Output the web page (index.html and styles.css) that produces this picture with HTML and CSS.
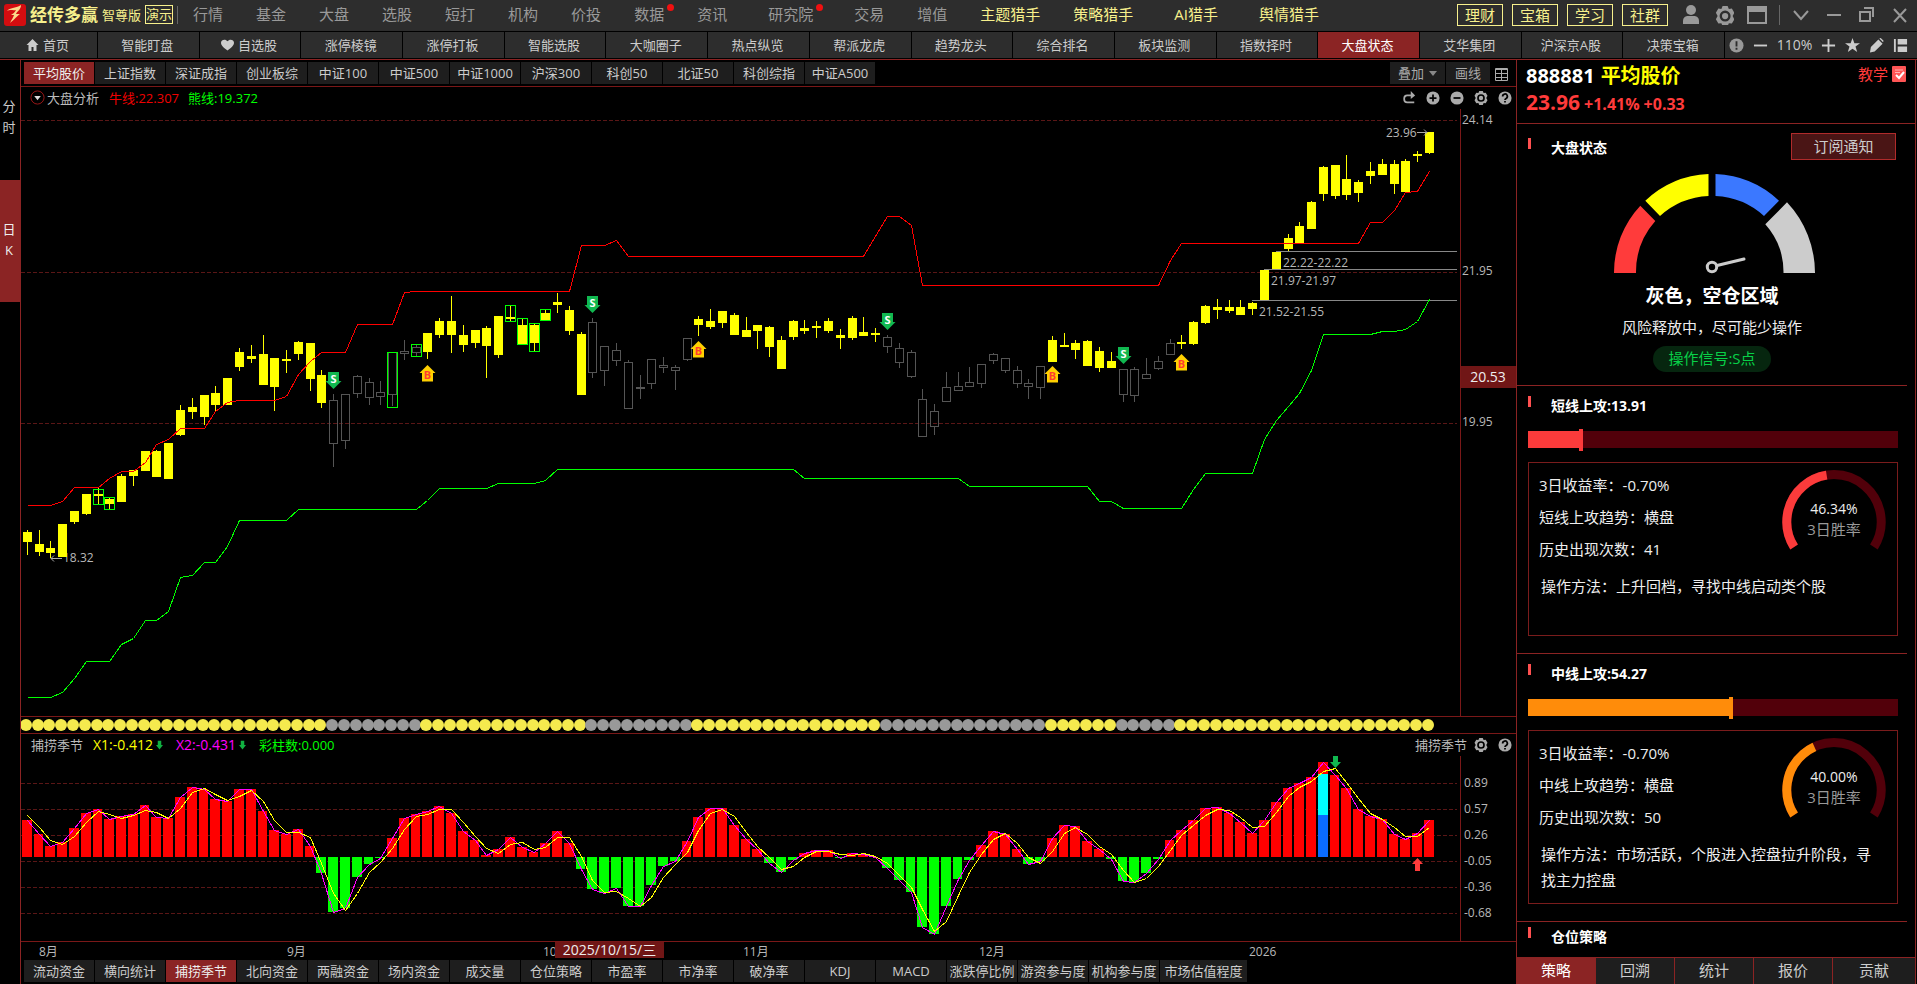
FILE: index.html
```html
<!DOCTYPE html>
<html lang="zh-CN">
<head>
<meta charset="utf-8">
<title>经传多赢 智尊版</title>
<link rel="stylesheet" href="styles.css">
</head>
<body>
<svg class="defs" aria-hidden="true">
  <symbol id="i-gear" viewBox="0 0 16 16"><path fill-rule="evenodd" d="M6 0h4l1 2.3 2.4-.3 2 3.4L14 8l1.4 2.6-2 3.4-2.4-.3L10 16H6l-1-2.3-2.4.3-2-3.4L2 8 .6 5.400l2-3.400 2.400.3zM8 3.600a4.400 4.400 0 1 0 0 8.800 4.400 4.400 0 0 0 0-8.800zM8 5.500a2.500 2.500 0 1 1 0 5 2.500 2.500 0 0 1 0-5z"/></symbol>
  <symbol id="i-help" viewBox="0 0 16 16"><circle cx="8" cy="8" r="7.500"/><path class="ink" d="M5.300 6.200a2.700 2.700 0 1 1 4 2.300c-.9.5-1.300.9-1.300 1.900M8 11.300v1.900"/></symbol>
  <symbol id="i-plus" viewBox="0 0 16 16"><circle cx="8" cy="8" r="7.500"/><path class="ink" d="M8 4v8M4 8h8"/></symbol>
  <symbol id="i-minus" viewBox="0 0 16 16"><circle cx="8" cy="8" r="7.500"/><path class="ink" d="M4 8h8"/></symbol>
  <symbol id="i-redo" viewBox="0 0 16 16"><path class="line" d="M12 5H6a3.500 3.500 0 0 0-3.500 3.500v1A3.500 3.500 0 0 0 6 13h8"/><path d="M10 0l5 5-5 4z"/></symbol>
</svg>
<header class="topbar">
  <svg class="logo" viewBox="0 0 22 22"><rect width="22" height="22" rx="3" fill="#d40d10"/><path d="M3 7c3-4 8-2 14-6 0 5-4 6-5 9h4c-3 2-5 5-10 9 2-4 3-5 4-8H7c2-1 4-3 5-5-3 1-6-1-9 1z" fill="#fbd98a"/></svg>
  <strong class="brand">经传多赢</strong><span class="edition">智尊版</span><span class="demo">演示</span>
  <nav class="menu">
    <a href="#">行情</a><a href="#">基金</a><a href="#">大盘</a><a href="#">选股</a><a href="#">短打</a><a href="#">机构</a><a href="#">价投</a><a href="#" class="dot">数据</a><a href="#">资讯</a><a href="#" class="wide dot">研究院</a><a href="#">交易</a><a href="#">增值</a><a href="#" class="gold">主题猎手</a><a href="#" class="gold">策略猎手</a><a href="#" class="gold wide">AI猎手</a><a href="#" class="gold">舆情猎手</a>
  </nav>
  <div class="shortcuts"><button>理财</button><button>宝箱</button><button>学习</button><button>社群</button></div>
  <div class="window-tools">
    <button aria-label="账户"><svg viewBox="0 0 20 20"><circle cx="10" cy="5" r="5"/><path d="M2 19v-3c0-4 3-5 5-5h6c2 0 5 1 5 5v3z"/></svg></button>
    <button aria-label="设置"><svg viewBox="-1 -1 18 18"><use href="#i-gear"/></svg></button>
    <button aria-label="窗口"><svg viewBox="0 0 20 20"><path fill-rule="evenodd" d="M0 1h20v18H0zm2 6v10h16V7z"/></svg></button>
    <span class="bar-line"></span>
    <button aria-label="展开"><svg viewBox="0 0 20 20"><path class="line" d="M3 6l7 8 7-8"/></svg></button>
    <button aria-label="最小化"><svg viewBox="0 0 20 20"><path class="line" d="M3 10h14"/></svg></button>
    <button aria-label="还原"><svg viewBox="0 0 20 20"><path class="line" d="M3 7h10v9H3zM7 3h9v9"/></svg></button>
    <button aria-label="关闭"><svg viewBox="0 0 20 20"><path class="line" d="M4 4l12 13M16 4L4 17"/></svg></button>
  </div>
</header>
<nav class="navbar">
  <a href="#" class="home"><svg viewBox="0 0 12 12"><path d="M6 0l6 6h-2v6H7V8H5v4H2V6H0z"/></svg>首页</a>
  <a href="#">智能盯盘</a>
  <a href="#"><svg viewBox="0 0 14 12"><path d="M7 12C2 8 0 6 0 3.500 0 0 5-1 7 2c2-3 7-2 7 1.500C14 6 12 8 7 12z"/></svg>自选股</a>
  <a href="#">涨停棱镜</a><a href="#">涨停打板</a><a href="#">智能选股</a><a href="#">大咖圈子</a><a href="#">热点纵览</a><a href="#">帮派龙虎</a><a href="#">趋势龙头</a><a href="#">综合排名</a><a href="#">板块监测</a><a href="#">指数择时</a><a href="#" class="on">大盘状态</a><a href="#">艾华集团</a><a href="#">沪深京A股</a><a href="#">决策宝箱</a>
  <div class="zoom-tools">
    <button aria-label="提示"><svg viewBox="0 0 16 16"><circle cx="8" cy="8" r="7.500" fill="#999"/><path d="M8 3.500v5.500M8 10.500v2" stroke="#2d2d2d" stroke-width="2"/></svg></button>
    <button aria-label="缩小"><svg viewBox="0 0 16 16"><path d="M1 7h14v2H1z"/></svg></button>
    <span>110%</span>
    <button aria-label="放大"><svg viewBox="0 0 16 16"><path d="M1 7h6V1h2v6h6v2H9v6H7V9H1z"/></svg></button>
    <button aria-label="收藏"><svg viewBox="0 0 16 16"><path d="M8 0l2 5.500h6L11.200 9l1.800 6-5-3.600L3 15l1.800-6L0 5.500h6z"/></svg></button>
    <button aria-label="画笔"><svg viewBox="0 0 16 16"><path d="M10 1.500L14.500 6 6 14.500 1 15.500l1-6zM11 .5l1.500-.5 3 3-.5 1.500z"/></svg></button>
    <button aria-label="布局"><svg viewBox="0 0 16 16"><path d="M1 1h2v14H1zM5 1h10v6H5zM5 9h10v6H5z"/></svg></button>
  </div>
</nav>
<main class="work">
  <aside class="periods"><button class="minute">分<br>时</button><button class="on">日<br>K</button></aside>
  <section class="charts">
    <div class="index-row">
      <button class="tab on">平均股价</button><button class="tab">上证指数</button><button class="tab">深证成指</button><button class="tab">创业板综</button><button class="tab">中证100</button><button class="tab">中证500</button><button class="tab">中证1000</button><button class="tab">沪深300</button><button class="tab">科创50</button><button class="tab">北证50</button><button class="tab">科创综指</button><button class="tab">中证A500</button>
      <div class="draw-tools"><button class="tab overlay">叠加<i></i></button><button class="tab pen">画线</button><button class="grid-btn" aria-label="宫格"><svg viewBox="0 0 13 13"><path d="M.5.5h12v12H.5zM.5 1.500h12M.5 5.500h12M6.500 1.500v11M.5 9.500h12" class="thin"/></svg></button></div>
    </div>
    <div class="info-row">
      <svg class="drop" viewBox="0 0 16 16"><circle cx="8" cy="8" r="7" fill="none" stroke="#a01818"/><path d="M4.500 6.500h7L8 11z" fill="#ddd"/></svg>
      <span class="name">大盘分析</span><span class="bull">牛线:22.307</span><span class="bear">熊线:19.372</span>
      <div class="icons"><svg><use href="#i-redo"/></svg><svg><use href="#i-plus"/></svg><svg><use href="#i-minus"/></svg><svg><use href="#i-gear"/></svg><svg><use href="#i-help"/></svg></div>
    </div>
    <div class="plot main-plot"><svg id="kline"></svg></div>
    <div class="plot strip"><svg id="dots"></svg></div>
    <div class="info-row season">
      <span class="name">捕捞季节</span><span class="x1">X1:-0.412</span><svg class="down" viewBox="0 0 8 10"><path d="M2 0h4v5h2L4 10 0 5h2z"/></svg><span class="x2">X2:-0.431</span><svg class="down" viewBox="0 0 8 10"><path d="M2 0h4v5h2L4 10 0 5h2z"/></svg><span class="bear">彩柱数:0.000</span>
      <div class="icons"><span>捕捞季节</span><svg><use href="#i-gear"/></svg><svg><use href="#i-help"/></svg></div>
    </div>
    <div class="plot sub-plot"><svg id="season"></svg></div>
    <div class="plot dates"><svg id="dates"></svg></div>
    <div class="indicator-row">
      <button class="tab">流动资金</button><button class="tab">横向统计</button><button class="tab on">捕捞季节</button><button class="tab">北向资金</button><button class="tab">两融资金</button><button class="tab">场内资金</button><button class="tab">成交量</button><button class="tab">仓位策略</button><button class="tab">市盈率</button><button class="tab">市净率</button><button class="tab">破净率</button><button class="tab">KDJ</button><button class="tab">MACD</button><button class="tab">涨跌停比例</button><button class="tab">游资参与度</button><button class="tab">机构参与度</button><button class="tab last">市场估值程度</button>
    </div>
  </section>
  <aside class="panel">
    <div class="quote">
      <div class="quote-name"><b>888881</b><b class="stock">平均股价</b><a href="#" class="teach">教学<svg viewBox="0 0 14 16"><rect width="14" height="16" rx="1" fill="#ff5555"/><path d="M3 4h8M3 6.500h5" stroke="#ffb3b3"/><path d="M4 9l3 3 5-6" fill="none" stroke="#fff" stroke-width="2"/></svg></a></div>
      <div class="quote-price"><b>23.96</b><b class="chg">+1.41%</b><b class="chg">+0.33</b></div>
    </div>
    <div class="panel-body">
      <section class="state">
        <div class="head"><h2>大盘状态</h2><button class="notify">订阅通知</button></div>
        <svg class="gauge" viewBox="-105 -103 210 104">
          <path fill="#ff3b3b" d="M-98 0A98 98 0 0 1-71.700-67.300L-56.700-52A77 77 0 0 0-76 0z"/>
          <path fill="#ff0" d="M-66.700-72.300A98.500 98.500 0 0 1-3.500-99V-77A77 77 0 0 0-52-57z"/>
          <path fill="#3b78ff" d="M3.500-99A98.500 98.500 0 0 1 67-72.300L52-57A77 77 0 0 0 3.500-77z"/>
          <path fill="#ccc" d="M75-70.700A103 103 0 0 1 103 0H71.500A72 72 0 0 0 53.300-48.700z"/>
          <circle cx="0" cy="-6" r="4.700" fill="none" stroke="#ccc" stroke-width="3"/><path d="M5-7.500L32-14" stroke="#ccc" stroke-width="3" stroke-linecap="round"/>
        </svg>
        <p class="verdict">灰色，空仓区域</p>
        <p class="advice">风险释放中，尽可能少操作</p>
        <p class="signal">操作信号:S点</p>
      </section>
      <section class="attack short">
        <div class="head"><h2>短线上攻:13.91</h2></div>
        <div class="level"><div class="fill" style="width:13.91%"></div></div>
        <div class="card">
          <div class="facts"><p>3日收益率：-0.70%</p><p>短线上攻趋势：横盘</p><p>历史出现次数：41</p></div>
          <div class="ring"><svg viewBox="0 0 104 84"><path class="track" d="M12.100 77A47.200 47.200 0 1 1 91.900 77"/><path class="value" pathLength="100" stroke-dasharray="46.34 100" d="M12.100 77A47.200 47.200 0 1 1 91.900 77"/></svg><div class="rate"><span>46.34%</span><small>3日胜率</small></div></div>
          <p class="method">操作方法：上升回档，寻找中线启动类个股</p>
        </div>
      </section>
      <section class="attack middle">
        <div class="head"><h2>中线上攻:54.27</h2></div>
        <div class="level"><div class="fill" style="width:54.27%"></div></div>
        <div class="card">
          <div class="facts"><p>3日收益率：-0.70%</p><p>中线上攻趋势：横盘</p><p>历史出现次数：50</p></div>
          <div class="ring"><svg viewBox="0 0 104 84"><path class="track" d="M12.100 77A47.200 47.200 0 1 1 91.900 77"/><path class="value" pathLength="100" stroke-dasharray="40 100" d="M12.100 77A47.200 47.200 0 1 1 91.900 77"/></svg><div class="rate"><span>40.00%</span><small>3日胜率</small></div></div>
          <p class="method">操作方法：市场活跃，个股进入控盘拉升阶段，寻找主力控盘</p>
        </div>
      </section>
      <section class="position"><div class="head"><h2>仓位策略</h2></div></section>
    </div>
    <div class="panel-tabs"><button class="on">策略</button><button>回溯</button><button>统计</button><button>报价</button><button>贡献</button></div>
  </aside>
</main>
<script src="chart.js"></script>
</body>
</html>
```
FILE: styles.css
```css
* { box-sizing: border-box; }
body { margin: 0; height: 100vh; display: flex; flex-direction: column; overflow: hidden; background: #000; color: #ccc; font: 13px/16px "Open Sans", "Noto Sans CJK SC", sans-serif; }
a { color: inherit; text-decoration: none; }
button { font: inherit; color: inherit; background: none; border: 0; padding: 0; margin: 0; white-space: nowrap; }
p, h2 { margin: 0; }
svg { display: block; fill: currentColor; flex: none; }
.defs { position: absolute; width: 0; height: 0; }
.line { fill: none; stroke: currentColor; stroke-width: 2; }
.thin { fill: none; stroke: currentColor; stroke-width: 1; }
.ink { fill: none; stroke: #000; stroke-width: 2; }

.topbar { height: 32px; flex: none; display: flex; align-items: center; padding: 0 7px 2px 4px; background: #2d2d2d; border-bottom: 1px solid #000; color: #999; white-space: nowrap; }
.logo { width: 22px; height: 22px; margin-right: 4px; }
.brand { font-size: 17px; color: #f7f08c; margin-right: 4px; }
.edition { color: #f7f08c; margin-right: 4px; }
.demo { width: 28px; height: 19px; line-height: 17px; text-align: center; border: 1px solid #f7f08c; color: #f7f08c; }
.menu { display: flex; gap: 33px; margin-left: 4px; padding: 0 0 2px 15px; border-left: 1px solid #666; font-size: 15px; }
.menu a { position: relative; }
.menu .wide { margin: 0 8px; }
.menu .gold { color: #f7f08c; }
.menu .dot::after { content: ""; position: absolute; right: -10px; top: -2px; width: 7px; height: 7px; border-radius: 50%; background: #f01010; }
.shortcuts { display: flex; gap: 9px; margin-left: auto; color: #f7f08c; font-size: 15px; }
.shortcuts button { width: 46px; height: 22px; line-height: 18px; border: 1px solid #f7f08c; }
.window-tools { display: flex; align-items: center; gap: 13px; margin-left: 13px; }
.window-tools svg { width: 20px; height: 20px; }
.bar-line { width: 1px; height: 20px; background: #666; margin: 0 -2px 0 -1px; }

.navbar { height: 28px; flex: none; display: flex; gap: 1px; padding-bottom: 1px; border-bottom: 1px solid #8b2323; background: #000; }
.navbar a { flex: 1 1 0; display: flex; align-items: center; justify-content: center; gap: 4px; padding-right: 2px; background: #2d2d2d; white-space: nowrap; }
.navbar .home { flex: 0 0 97px; }
.navbar .on { background: #8b2424; color: #fff; }
.navbar a svg { width: 13px; height: 12px; }
.zoom-tools { flex: 0 0 192px; display: flex; align-items: center; justify-content: space-between; padding: 0 9px 0 4px; background: #2d2d2d; font-size: 14px; }
.zoom-tools svg { width: 15px; height: 15px; }

.work { flex: 1; min-height: 0; display: flex; }
.periods { width: 21px; flex: none; border-right: 1px solid #8b2323; padding-top: 36px; line-height: 21px; }
.periods button { display: block; width: 100%; padding: 0 2px 3px 0; }
.periods .minute { height: 42px; margin-bottom: 42px; }
.periods .on { height: 122px; background: #8b2424; color: #eee; }
.charts { flex: 1; min-width: 0; display: flex; flex-direction: column; }
.index-row { height: 27px; flex: none; display: flex; gap: 1px; padding: 2px 8px 2px 3px; border-bottom: 1px solid #7a1818; }
.tab { width: 70px; height: 22px; background: #1e1e1e; text-align: center; flex: none; }
.tab.on { background: #8b2424; color: #eee; }
.draw-tools { margin-left: auto; display: flex; gap: 1px; color: #aaa; }
.tab.overlay { width: 55px; display: flex; align-items: center; justify-content: center; gap: 5px; }
.overlay i { border: 4px solid transparent; border-top: 5px solid #888; border-bottom: 0; }
.tab.pen { width: 44px; }
.grid-btn { margin-left: 4px; padding-top: 2px; }
.grid-btn svg { width: 13px; height: 13px; }
.info-row { height: 22px; flex: none; display: flex; align-items: center; padding: 0 4px 1px 9px; white-space: nowrap; }
.drop { width: 15px; height: 15px; margin-right: 2px; }
.name { margin-right: 10px; color: #bbb; }
.bull { color: #f00000; margin-right: 9px; }
.bear { color: #0f0; }
.x1, .x2 { font-size: 14px; color: #ff0; }
.x2 { color: #f0f; }
.down { width: 7px; height: 10px; color: #10b040; margin: 0 13px 0 3px; }
.season { padding-left: 10px; }
.icons { margin-left: auto; display: flex; align-items: center; gap: 10px; color: #aaa; }
.icons svg { width: 14px; height: 14px; }
.season .icons span { margin-right: -3px; color: #bbb; }
.plot { position: relative; min-height: 0; }
.plot svg { position: absolute; inset: 0; width: 100%; height: 100%; }
.plot text { font-size: 12px; fill: #b8b8b8; }
.plot text.mark { font-size: 11px; font-weight: bold; text-anchor: middle; fill: #fff; }
.plot text.buy { fill: #ff3b30; }
.plot text.tip { font-size: 14px; fill: #eee; text-anchor: middle; }
.plot .crisp { shape-rendering: crispEdges; }
.plot .gridline { stroke: #5a1616; stroke-dasharray: 4 2; }
.plot .axis { stroke: #7a1818; }
.main-plot { flex: 607 1 0; }
.sub-plot { flex: 185 1 0; }
.strip { height: 18px; flex: none; border: solid #7a1818; border-width: 1px 0; }
.dates { height: 18px; flex: none; border-top: 1px solid #7a1818; }
.indicator-row { display: flex; flex: none; gap: 1px; padding: 1px 0 2px 3px; }
.indicator-row .tab { padding-bottom: 1px; }
.tab.last { width: 87px; }

.panel { width: 400px; margin-right: 1px; flex: none; display: flex; flex-direction: column; border: solid #8b2323; border-width: 0 1px; }
.quote { height: 64px; flex: none; padding: 6px 9px 0; border-bottom: 1px solid #8b2323; }
.quote-name { display: flex; align-items: center; gap: 6px; height: 20px; font-size: 20px; line-height: 20px; color: #fff; }
.stock { color: #ff0; }
.teach { margin-left: auto; display: flex; gap: 4px; align-items: center; padding-bottom: 4px; font-size: 15px; color: #ff3b3b; }
.teach svg { width: 14px; height: 16px; }
.quote-price { display: flex; align-items: baseline; gap: 4px; margin-top: 4px; font-size: 21px; line-height: 24px; color: #ff3b3b; }
.chg { font-size: 16px; }
.panel-body { flex: 1; min-height: 0; overflow: hidden; margin-right: 8px; }
.panel-body section { padding: 0 8px 0 11px; border-bottom: 1px solid #8b2323; }
.head { display: flex; align-items: flex-start; justify-content: space-between; height: 45px; padding-top: 10px; }
.head::before { content: ""; width: 3px; height: 11px; background: #ff5050; }
.head h2 { margin: 0 auto 0 20px; font-size: 14px; line-height: 20px; color: #fff; }
.panel-body .state { height: 262px; padding-right: 11px; }
.state .head { padding-top: 9px; }
.state .head::before { margin-top: 5px; }
.state .head h2 { margin-top: 5px; }
.notify { width: 105px; height: 27px; padding-bottom: 2px; border: 1px solid #b02b2b; background: #4a1515; font-size: 15px; }
.gauge { width: 210px; height: 104px; margin: 1px auto 0; }
.state p { text-align: center; color: #eee; }
.state .verdict { margin-top: 9px; font-size: 19px; line-height: 26px; font-weight: bold; color: #fff; }
.state .advice { margin-top: 6px; font-size: 15px; line-height: 24px; }
.state .signal { width: 118px; height: 26px; margin: 7px auto 0; border-radius: 13px; background: #06260f; color: #08d048; font-size: 15px; line-height: 24px; }
.attack { height: 268px; }
.level { height: 17px; background: #52000a; width: 370px; }
.fill { position: relative; height: 17px; background: var(--tone); }
.fill::after { content: ""; position: absolute; left: 100%; top: -2px; width: 4px; height: 22px; background: var(--tone); }
.short { --tone: #fb3b3b; }
.middle { --tone: #ff8c0a; }
.card { width: 370px; height: 174px; margin-top: 14px; padding: 6px 11px 0 10px; display: grid; grid-template-columns: 1fr 104px; align-content: start; border: 1px solid #7a1c1c; color: #eee; font-size: 15px; }
.facts { line-height: 32px; }
.ring { display: grid; width: 104px; margin-top: 1px; align-content: start; }
.ring svg, .rate { grid-area: 1 / 1; }
.ring svg { width: 104px; height: 84px; }
.track, .value { fill: none; stroke: #52000a; stroke-width: 9; }
.value { stroke: var(--tone); }
.rate { display: flex; flex-direction: column; align-items: center; padding-top: 28px; font-size: 14px; line-height: 21px; }
.rate small { font-size: 15px; color: #999; }
.method { grid-column: 1 / 3; margin: 8px 8px 0 2px; line-height: 26px; }
.panel-body .position { border: 0; }
.position .head { padding-top: 5px; }
.panel-tabs { height: 27px; flex: none; display: flex; border-top: 1px solid #8b2323; font-size: 15px; }
.panel-tabs button { flex: 79 1 0; background: #1e1e1e; border-right: 1px solid #8b2323; padding-bottom: 2px; }
.panel-tabs button:last-child { flex-grow: 83; border-right: 0; }
.panel-tabs .on { background: #8b2424; color: #fff; }
```
FILE: chart.js
```javascript
// Candles: [high, body top, body bottom, low] in plot units, measured downwards.
const TOP = 109;
const candles = [
[530,532,542,555],[530,544,552,556],[541,548,553,558],[524,524,557,557],[511,511,522,524],[494,494,514,515],[488,494,496,504],[497,499,504,509],[474,476,502,502],[470,470,476,486],
[451,451,471,471],[450,451,477,477],[443,443,479,479],[405,410,435,436],[398,407,412,419],[395,395,417,425],[386,393,405,412],[378,378,405,405],[348,352,367,371],[345,356,359,363],
[335,354,385,385],[358,358,387,411],[350,359,361,373],[341,342,354,360],[343,343,379,391],[370,375,403,408],[394,400,444,467],[394,394,441,449],[375,376,394,398],[378,382,398,405],
[381,392,397,405],[352,352,395,406],[340,351,354,360],[344,347,353,356],[333,333,352,359],[318,321,335,338],[296,321,335,353],[325,335,345,352],[330,330,343,348],[326,328,346,378],
[316,316,355,358],[305,317,319,322],[318,325,344,344],[323,325,343,352],[309,313,320,320],[293,302,305,313],[306,310,331,335],[332,334,395,395],[318,322,373,378],[346,346,371,386],
[343,350,361,366],[360,362,409,409],[375,387,389,399],[359,359,384,389],[357,365,368,373],[365,367,371,390],[338,338,360,361],[316,319,325,336],[309,321,327,329],[311,311,323,328],
[313,315,335,335],[317,330,337,337],[325,325,331,349],[326,327,347,357],[336,340,369,369],[320,321,337,340],[320,328,331,334],[321,326,328,338],[318,321,331,333],[329,335,338,349],
[316,318,338,340],[317,332,336,336],[328,333,335,342],[335,337,347,353],[343,348,363,368],[350,352,377,378],[389,399,437,437],[404,411,427,435],[372,387,402,402],[372,386,391,391],
[367,382,387,387],[364,364,384,388],[353,354,361,364],[358,358,371,373],[366,370,384,388],[379,383,387,399],[366,366,388,399],[336,340,362,362],[333,345,347,347],[340,343,350,359],
[340,341,366,366],[347,351,368,372],[352,361,368,368],[369,369,395,402],[367,369,396,402],[358,374,379,379],[356,361,369,370],[339,343,355,355],[335,342,344,349],[321,322,344,345],
[305,306,323,324],[299,307,310,319],[300,307,311,313],[300,307,315,315],[302,303,309,315],[270,270,300,300],[252,252,270,270],[234,238,249,251],[222,226,243,243],[201,202,229,229],
[166,167,194,201],[165,165,196,199],[155,179,195,200],[180,182,193,202],[162,171,176,184],[159,164,175,175],[160,164,184,194],[159,161,192,192],[151,154,156,162],[132,132,153,154]];
const hollow = [[26, 33], [48, 56], [73, 86], [93, 97]];
const boxes = [[6,489,504],[7,497,509],[31,352,407],[33,344,356],[41,305,321],[42,318,344],[43,323,351],[44,309,320]];
const bull = [[0,505],[2,505],[3,501],[4,487],[6,487],[7,478],[8,471],[9,471],[10,462],[11,444],[12,439],[13,428],[15,428],[16,411],[17,402],[18,400],[21,400],[22,396],[23,374],[24,361],[25,352],[27,352],[28,324],[31,324],[32,292],[33,291],[46,291],[47,245],[49,245],[50,240],[51,256],[71,256],[73,216],[74,216],[75,225],[76,285],[96,285],[97,260],[98,243],[113,243],[114,222],[115,222],[116,210],[117,192],[118,191],[119,171]];
const bear = [[0,697],[2,697],[3,692],[4,678],[5,661],[7,661],[8,644],[9,638],[10,620],[11,620],[12,611],[13,577],[14,575],[15,562],[16,562],[17,546],[18,520],[22,520],[23,509],[33,509],[34,500],[35,488],[39,488],[40,483],[43,483],[44,480],[45,469],[65,469],[66,478],[79,478],[80,486],[90,486],[91,501],[92,501],[93,508],[98,508],[99,489],[100,473],[104,473],[105,439],[106,420],[107,406],[108,393],[109,370],[110,334],[114,334],[115,331],[116,331],[117,329],[118,321],[119,299]];
// Oscillator levels, three units to a pixel, measured downwards.
const BASE = 471;
const bars = [360,402,438,427,384,339,327,357,348,342,315,351,354,291,261,267,297,303,267,267,333,390,402,387,438,519,636,624,531,492,474,414,354,342,333,318,339,393,420,465,447,411,441,456,429,393,429,507,567,579,564,618,618,555,498,483,423,351,324,324,375,417,447,489,516,480,459,450,450,474,459,462,471,504,540,576,681,702,618,537,480,435,393,402,447,492,483,414,375,378,423,447,477,543,546,519,477,420,390,360,324,321,339,366,399,360,306,264,249,231,186,225,264,327,348,357,402,417,399,360];
const slow = [345,380,421,433,409,366,334,343,355,346,331,335,353,325,277,265,282,301,287,270,302,361,397,397,412,490,580,630,580,515,485,445,387,349,341,328,328,367,408,445,458,431,427,448,441,412,412,468,540,575,574,593,618,590,530,492,455,389,338,327,347,396,438,472,506,498,471,454,452,463,466,460,469,489,524,560,628,692,663,585,515,463,416,398,428,470,489,452,399,380,402,437,463,510,545,533,497,450,405,375,345,326,331,352,381,379,335,288,262,242,212,205,245,295,340,358,381,408,408,380];

const isHollow = i => hollow.some(([a, b]) => i >= a && i <= b);
const rect = (x, y, w, h, a) => `<rect class="crisp" x="${x}" y="${y}" width="${w}" height="${h}" ${a}/>`;
const poly = (pts, c) => `<polyline class="crisp" fill="none" stroke="${c}" points="${pts.map(p => p.join()).join(' ')}"/>`;
const text = (x, y, s, c = '') => `<text x="${x}" y="${y}" class="${c}">${s}</text>`;
const hline = (x1, x2, y, c) => `<path class="crisp ${c}" d="M${x1} ${y + .5}H${x2}"/>`;

function draw() {
  const k = document.getElementById('kline');
  const w = k.clientWidth, plot = w - 56;
  const X = i => Math.floor(6.4 + i * (plot - 37) / 119);
  const sy = k.clientHeight / 607;
  const Y = v => Math.round((v - TOP) * sy);
  const right = plot - 3;
  let s = '';
  [120, 272, 423].forEach(v => s += hline(0, right, Y(v), 'gridline'));
  s += `<path class="crisp axis" d="M${plot + .5} 0V${Y(716)}"/>`;
  s += text(X(3) + 1, Y(558) + 4, '18.32') + `<path d="M${X(2) + 1} ${Y(558) + .5}h11m-11 0l3-3m-3 3l3 3" fill="none" stroke="#aaa"/>`;
  candles.forEach(([hi, a, b, lo], i) => {
    const x = X(i), h = Math.max(Y(b) - Y(a), 2);
    if (isHollow(i)) {
      if (a > hi) s += rect(x, Y(hi), 1, Y(a) - Y(hi), 'fill="#555"');
      if (lo > b) s += rect(x, Y(b), 1, Y(lo) - Y(b), 'fill="#555"');
      s += `<rect class="crisp" x="${x - 3.5}" y="${Y(a) + .5}" width="8" height="${h - 1}" fill="none" stroke="#555"/>`;
    } else s += rect(x, Y(hi), 1, Y(lo) - Y(hi), 'fill="#ff0"') + rect(x - 4, Y(a), 9, h, 'fill="#ff0"');
  });
  boxes.forEach(([i, a, b]) => s += `<rect class="crisp" x="${X(i) - 4.5}" y="${Y(a) + .5}" width="10" height="${Y(b) - Y(a)}" fill="none" stroke="#0f0"/>`);
  [[106, 251, '22.22-22.22'], [105, 269, '21.97-21.97'], [104, 300, '21.52-21.55']].forEach(([i, v, t]) => {
    s += `<path class="crisp" stroke="#888" d="M${X(i)} ${Y(v) + .5}H${right}"/>` + text(X(i) + 7, Y(v) + 16, t);
  });
  const line = pts => pts.map(([i, v]) => [X(i) + .5, Y(v) + .5]);
  s += poly(line(bull), '#f00') + poly(line(bear), '#0f0');
  [[26, 372], [48, 296], [73, 313], [93, 347]].forEach(([i, v]) => {
    const x = X(i) + .5, y = Y(v);
    s += `<path fill="#10b850" d="M${x - 5.5} ${y}h11v9h2.500l-8 8-8-8h2.500z"/>` + text(x, y + 11, 'S', 'mark');
  });
  [[34, 365], [57, 341], [87, 366], [98, 354]].forEach(([i, v]) => {
    const x = X(i) + .5, y = Y(v);
    s += `<path fill="#ffd000" d="M${x} ${y}l8 8h-2.500v8.500h-11v-8.500h-2.500z"/>` + text(x, y + 14, 'B', 'mark buy');
  });
  s += text(X(119) - 43, Y(133) + 4, '23.96') + `<path d="M${X(119) - 12} ${Y(132) + .5}h10m0 0l-3-3m3 3l-3 3" fill="none" stroke="#aaa"/>`;
  [[120, '24.14'], [271, '21.95'], [422, '19.95']].forEach(([v, t]) => s += text(plot + 2, Y(v) + 4, t));
  s += rect(plot + 1, Y(366), 55, 22, 'fill="#701616"') + text(plot + 28, Y(377) + 5, '20.53', 'tip');
  k.innerHTML = s;

  document.getElementById('dots').innerHTML = candles.map((_, i) =>
    `<circle cx="${X(i) - 1}" cy="8" r="6" fill="${isHollow(i) ? '#999' : '#f5ea4e'}"/>`).join('');

  const m = document.getElementById('season');
  const sm = m.clientHeight / 185;
  const V = v => Math.round((v - 168) / 3 * sm);
  s = '';
  [[250, '0.89'], [328, '0.57'], [406, '0.26'], [484, '-0.05'], [562, '-0.36'], [640, '-0.68']].forEach(([v, t]) => {
    s += hline(0, right, V(v), 'gridline') + text(plot + 4, V(v) + 4, t);
  });
  s += `<path class="crisp axis" d="M${plot + .5} 0V${m.clientHeight}"/>`;
  bars.forEach((v, i) => {
    const up = v < BASE;
    const left = X(i) - 5;
    s += rect(left, V(Math.min(v, BASE)), Math.min(10, X(i + 1) - X(i) - 2), Math.abs(V(v) - V(BASE)), `fill="${up ? '#f00' : '#0f0'}"`);
  });
  s += rect(X(110) - 5, V(222), 10, V(345) - V(222), 'fill="#0ff"') + rect(X(110) - 5, V(345), 10, V(BASE) - V(345), 'fill="#0a6cff"');
  s += poly(bars.map((v, i) => [X(i) + .5, V(v) + .5]), '#f0f') + poly(slow.map((v, i) => [X(i) + .5, V(v) + .5]), '#ff0');
  s += `<path fill="#10b850" d="M${X(111) - 2} 0h5v6h3l-5.500 6-5.500-6h3z"/>`;
  s += `<path fill="#ff3b3b" d="M${X(118) + .5} ${V(474)}l5.500 6h-3v7h-5v-7h-3z"/>`;
  m.innerHTML = s;

  const label = (x, t) => text(x * plot / 1439, 14, t);
  document.getElementById('dates').innerHTML =
    label(18, '8月') + label(266, '9月') + label(522, '10月') + label(722, '11月') + label(958, '12月') + label(1228, '2026') +
    rect(Math.round(534 * plot / 1439), 0, 109, 16, 'fill="#701616"') + text(588.5 * plot / 1439, 13, '2025/10/15/三', 'tip');
}
draw();
addEventListener('resize', draw);
```
